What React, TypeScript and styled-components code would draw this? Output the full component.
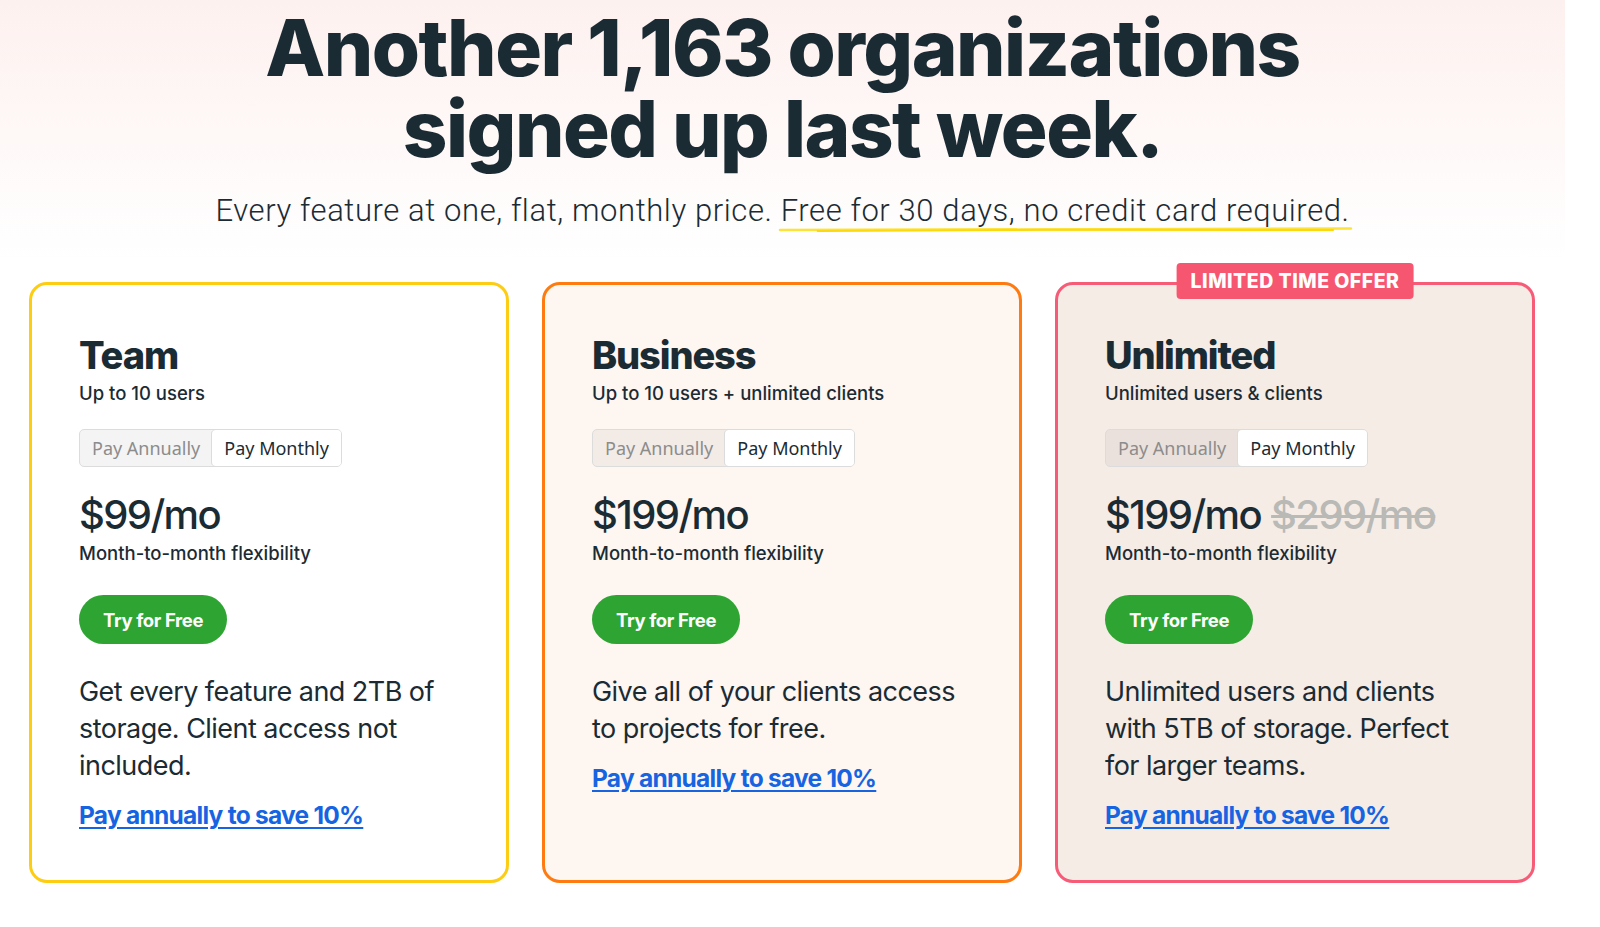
import React from "react";
import styled, { createGlobalStyle } from "styled-components";

const GlobalStyle = createGlobalStyle`
  * { box-sizing: border-box; }
  html, body {
    margin: 0;
    padding: 0;
    background: #ffffff;
  }
  body {
    font-family: "Inter", "Noto Sans", sans-serif;
    color: #1b2b34;
  }
`;

const Page = styled.div`
  width: 1565px;
  min-height: 927px;
  background: linear-gradient(180deg, #fdf1ef 0px, #ffffff 260px);
  padding-top: 7px;
`;

const Headline = styled.h1`
  margin: 0;
  text-align: center;
  font-family: "Inter", sans-serif;
  font-weight: 800;
  font-size: 78px;
  letter-spacing: -1.5px;
  color: #1b2b34;
`;

const HeadlineLine = styled.span`
  display: block;
  height: 81px;
  line-height: 81px;
`;

const Lede = styled.p`
  margin: 24px 0 0;
  text-align: center;
  font-family: "Roboto", sans-serif;
  font-weight: 300;
  font-size: 31px;
  line-height: 36px;
  letter-spacing: 0.6px;
  color: #1b2b34;
`;

const Marked = styled.span`
  position: relative;
  display: inline-block;

  svg {
    position: absolute;
    left: -3px;
    bottom: -4px;
    width: calc(100% + 6px);
    height: 8px;
  }
`;

const Plans = styled.div`
  display: grid;
  grid-template-columns: repeat(3, 480px);
  gap: 33px;
  padding: 0 29px;
  margin-top: 53px;
`;

const Card = styled.section<{ $border: string; $bg: string }>`
  position: relative;
  height: 601px;
  border: 3px solid ${({ $border }) => $border};
  border-radius: 18px;
  background: ${({ $bg }) => $bg};
  padding: 48px 47px;
  display: flex;
  flex-direction: column;
  align-items: flex-start;
`;

const Badge = styled.div`
  position: absolute;
  top: -22px;
  left: 50%;
  transform: translateX(-50%);
  background: #f6566f;
  color: #ffffff;
  font-weight: 800;
  font-size: 19.5px;
  line-height: 36px;
  padding: 0 14px;
  border-radius: 4px;
  white-space: nowrap;
  letter-spacing: 0.025em;
`;

const PlanName = styled.h2`
  margin: 0;
  font-weight: 800;
  font-size: 38px;
  line-height: 44px;
  letter-spacing: -0.03em;
`;

const Audience = styled.div`
  font-weight: 500;
  font-size: 18.5px;
  line-height: 24px;
  margin-top: 4px;
`;

const Toggle = styled.div`
  display: flex;
  margin-top: 24px;
  border: 1px solid #dcdcdc;
  border-radius: 5px;
  background: rgba(0, 0, 0, 0.045);
`;

const ToggleOption = styled.div<{ $active?: boolean }>`
  height: 36px;
  display: flex;
  align-items: center;
  padding: 0 12px;
  font-family: "Noto Sans", sans-serif;
  font-size: 18px;
  color: ${({ $active }) => ($active ? "#1b2b34" : "#8c8c8c")};
  background: ${({ $active }) => ($active ? "#ffffff" : "transparent")};
  border-radius: ${({ $active }) => ($active ? "4px" : "0")};
  box-shadow: ${({ $active }) => ($active ? "-1px 0 0 #dcdcdc" : "none")};
`;

const PriceRow = styled.div`
  display: flex;
  align-items: baseline;
  gap: 10px;
  margin-top: 24px;
`;

const Price = styled.span<{ $old?: boolean }>`
  font-weight: 500;
  font-size: 40px;
  line-height: 48px;
  letter-spacing: -0.04em;
  color: ${({ $old }) => ($old ? "#b9b9b6" : "#1b2b34")};
  text-decoration: ${({ $old }) => ($old ? "line-through" : "none")};
  text-decoration-thickness: 3px;
`;

const Term = styled.div`
  font-weight: 500;
  font-size: 18.5px;
  line-height: 24px;
  margin-top: 2px;
`;

const TryButton = styled.button`
  margin-top: 30px;
  height: 49px;
  padding: 0 24px;
  border: none;
  border-radius: 25px;
  background: #2ea432;
  color: #ffffff;
  font-family: "Inter", sans-serif;
  font-weight: 700;
  font-size: 18.5px;
  letter-spacing: -0.02em;
  cursor: pointer;
`;

const Description = styled.p`
  margin: 29px 0 0;
  font-size: 27px;
  line-height: 37px;
  font-weight: 400;
  letter-spacing: -0.02em;
  max-width: 380px;
`;

const SaveLink = styled.a`
  margin-top: 15px;
  font-weight: 700;
  font-size: 24.5px;
  line-height: 32px;
  letter-spacing: -0.03em;
  color: #1764e2;
  text-decoration: underline;
  text-decoration-thickness: 2px;
  text-underline-offset: 3px;
`;

interface Plan {
  name: string;
  audience: string;
  price: string;
  oldPrice?: string;
  description: string;
  border: string;
  bg: string;
  badge?: string;
}

const plans: Plan[] = [
  {
    name: "Team",
    audience: "Up to 10 users",
    price: "$99/mo",
    description: "Get every feature and 2TB of storage. Client access not included.",
    border: "#fdcd14",
    bg: "#ffffff",
  },
  {
    name: "Business",
    audience: "Up to 10 users + unlimited clients",
    price: "$199/mo",
    description: "Give all of your clients access to projects for free.",
    border: "#fd7b10",
    bg: "#fef6f1",
  },
  {
    name: "Unlimited",
    audience: "Unlimited users & clients",
    price: "$199/mo",
    oldPrice: "$299/mo",
    description: "Unlimited users and clients with 5TB of storage. Perfect for larger teams.",
    border: "#f65c78",
    bg: "#f5ece6",
    badge: "LIMITED TIME OFFER",
  },
];

const App: React.FC = () => (
  <>
    <GlobalStyle />
    <Page>
      <Headline>
        <HeadlineLine>Another 1,163 organizations</HeadlineLine>
        <HeadlineLine>signed up last week.</HeadlineLine>
      </Headline>
      <Lede>
        Every feature at one, flat, monthly price.{" "}
        <Marked>
          Free for 30 days, no credit card required.
          <svg viewBox="0 0 580 8" preserveAspectRatio="none" aria-hidden="true">
            <path d="M2 5 C 120 3, 300 2.5, 578 3.5" stroke="#fde23a" strokeWidth="2.5" fill="none" strokeLinecap="round" />
            <path d="M40 6 C 200 4.5, 420 4.5, 560 5" stroke="#fdd80a" strokeWidth="2" fill="none" strokeLinecap="round" />
          </svg>
        </Marked>
      </Lede>
      <Plans>
        {plans.map((plan) => (
          <Card key={plan.name} $border={plan.border} $bg={plan.bg}>
            {plan.badge && <Badge>{plan.badge}</Badge>}
            <PlanName>{plan.name}</PlanName>
            <Audience>{plan.audience}</Audience>
            <Toggle>
              <ToggleOption>Pay Annually</ToggleOption>
              <ToggleOption $active>Pay Monthly</ToggleOption>
            </Toggle>
            <PriceRow>
              <Price>{plan.price}</Price>
              {plan.oldPrice && <Price $old>{plan.oldPrice}</Price>}
            </PriceRow>
            <Term>Month-to-month flexibility</Term>
            <TryButton>Try for Free</TryButton>
            <Description>{plan.description}</Description>
            <SaveLink href="#">Pay annually to save 10%</SaveLink>
          </Card>
        ))}
      </Plans>
    </Page>
  </>
);

export default App;
